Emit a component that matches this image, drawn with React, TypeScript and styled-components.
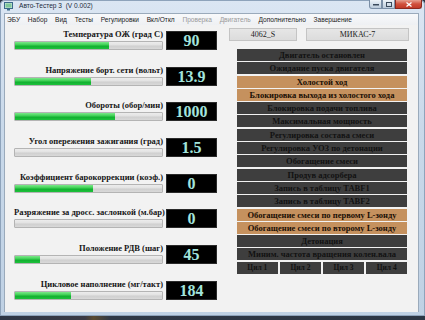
import React from "react";
import styled, { createGlobalStyle } from "styled-components";

const Global = createGlobalStyle`
  html, body { margin: 0; padding: 0; background: #2c3644; }
  #root { width: 425px; height: 320px; overflow: hidden; position: relative; }
`;

const Desktop = styled.div`
  width: 425px;
  height: 320px;
  background: linear-gradient(90deg, #2d3646 0%, #3a3a44 20%, #5a4a30 22%, #2f3846 26%, #2c3644 100%);
  display: flex;
  flex-direction: column;
`;

const Window = styled.div`
  height: 316px;
  display: flex;
  flex-direction: column;
  background: linear-gradient(180deg, #dbe6f3 0%, #c9d9ea 40%, #bfd1e4 100%);
  border-radius: 5px 5px 0 0;
  padding: 0 6px 4px 4px;
  box-sizing: border-box;
  box-shadow: inset 0 0 0 1px #8ea3bb;
`;

const TitleBar = styled.div`
  height: 13px;
  display: flex;
  align-items: flex-start;
  font-family: "Liberation Sans", "DejaVu Sans", sans-serif;
`;

const TitleIcon = styled.svg`
  width: 9px;
  height: 9px;
  margin: 2px 6px 0 0;
  flex: none;
`;

const TitleText = styled.div`
  font-size: 6.6px;
  color: #1c2a3a;
  line-height: 12px;
  white-space: pre;
  flex: 1;
`;

const WinButtons = styled.div`
  display: flex;
  margin-right: -3px;
`;

const WinBtn = styled.div<{ $close?: boolean; $w: number }>`
  width: ${(p) => p.$w}px;
  height: 9px;
  box-sizing: border-box;
  border: 1px solid ${(p) => (p.$close ? "#8a2a20" : "#7a8ea6")};
  border-top: none;
  background: ${(p) =>
    p.$close
      ? "linear-gradient(180deg, #e6a090 0%, #d0503c 50%, #c23a28 100%)"
      : "linear-gradient(180deg, #eef3f8 0%, #d4dfea 50%, #bccbdb 100%)"};
  display: flex;
  align-items: center;
  justify-content: center;
  &:first-child { border-bottom-left-radius: 3px; }
  &:last-child { border-bottom-right-radius: 3px; }
`;

const Client = styled.div`
  flex: 1;
  display: flex;
  flex-direction: column;
  background: #f2f2f2;
  border: 1px solid #9aaabb;
  border-bottom: none;
  min-height: 0;
`;

const MenuBar = styled.div`
  height: 11px;
  display: flex;
  align-items: center;
  gap: 7.7px;
  padding-left: 2px;
  background: linear-gradient(180deg, #f8f9fb 0%, #eef0f3 100%);
  font-family: "Liberation Sans", "DejaVu Sans", sans-serif;
  font-size: 6.6px;
`;

const MenuItem = styled.span<{ $disabled?: boolean }>`
  color: ${(p) => (p.$disabled ? "#9a9a9a" : "#1a1a1a")};
  white-space: nowrap;
`;

const Main = styled.div`
  flex: 1;
  display: flex;
  padding-left: 9px;
`;

const LeftCol = styled.div`
  display: flex;
  flex-direction: column;
  gap: 14.7px;
  padding-top: 4px;
`;

const GaugeRow = styled.div`
  display: flex;
  align-items: flex-end;
  gap: 3px;
  height: 21px;
`;

const GaugeInfo = styled.div`
  width: 149px;
  display: flex;
  flex-direction: column;
  align-items: stretch;
`;

const GaugeLabel = styled.div`
  font-family: "Liberation Serif", "DejaVu Serif", serif;
  font-weight: bold;
  font-size: 8.5px;
  line-height: 10px;
  text-align: right;
  color: #161616;
  white-space: nowrap;
  margin-bottom: 2px;
`;

const Bar = styled.div`
  height: 9px;
  box-sizing: border-box;
  border: 1px solid #b4b4b4;
  border-radius: 1px;
  background: linear-gradient(180deg, #ececec 0%, #e2e2e2 45%, #cfcfcf 55%, #d9d9d9 100%);
  overflow: hidden;
`;

const BarFill = styled.div`
  height: 100%;
  background: linear-gradient(180deg, #7ce88a 0%, #3fd055 40%, #12b030 60%, #1ec23c 100%);
`;

const ValueBox = styled.div`
  width: 51px;
  height: 19px;
  box-sizing: border-box;
  background: #000;
  border: 1px solid #2a2a2a;
  color: #a2e4dc;
  font-family: "Liberation Serif", "DejaVu Serif", serif;
  font-weight: bold;
  font-size: 16px;
  line-height: 17px;
  text-align: center;
`;

const RightCol = styled.div`
  display: flex;
  flex-direction: column;
  padding-top: 3px;
  margin-left: 12px;
`;

const InfoRow = styled.div`
  display: flex;
  gap: 9px;
`;

const InfoBox = styled.div<{ $w: number }>`
  width: ${(p) => p.$w}px;
  height: 13px;
  box-sizing: border-box;
  background: linear-gradient(180deg, #e6e6e6 0%, #dcdcdc 100%);
  border: 1px solid #c4c4c4;
  font-family: "Liberation Serif", "DejaVu Serif", serif;
  font-size: 8px;
  line-height: 11px;
  text-align: center;
  color: #222;
`;

const StatusList = styled.div`
  margin: 8px 0 0 8px;
  width: 170px;
  display: flex;
  flex-direction: column;
  gap: 1.3px;
`;

const StatusRow = styled.div<{ $tone: "dark" | "orange" }>`
  height: 12px;
  background: ${(p) => (p.$tone === "orange" ? "#c5915e" : "#3e3e3e")};
  color: ${(p) => (p.$tone === "orange" ? "#1a0f05" : "#121212")};
  font-family: "Liberation Serif", "DejaVu Serif", serif;
  font-weight: bold;
  font-size: 8.5px;
  line-height: 12px;
  text-align: center;
  white-space: nowrap;
`;

const CylRow = styled.div`
  display: flex;
  gap: 2.5px;
  height: 12px;
  margin-top: 0.5px;
`;

const CylBtn = styled.div`
  flex: 1;
  background: #3e3e3e;
  color: #121212;
  font-family: "Liberation Serif", "DejaVu Serif", serif;
  font-weight: bold;
  font-size: 7.5px;
  line-height: 12px;
  text-align: center;
`;

const gauges = [
  { label: "Температура ОЖ (град С)", value: "90", fill: 64 },
  { label: "Напряжение борт. сети (вольт)", value: "13.9", fill: 52 },
  { label: "Обороты (обор/мин)", value: "1000", fill: 68 },
  { label: "Угол опережения зажигания (град)", value: "1.5", fill: 0 },
  { label: "Коэффициент барокоррекции (коэф.)", value: "0", fill: 53 },
  { label: "Разряжение за дросс. заслонкой (м.бар)", value: "0", fill: 0 },
  { label: "Положение РДВ (шаг)", value: "45", fill: 17 },
  { label: "Цикловое наполнение (мг/такт)", value: "184", fill: 38 },
];

const statuses: { text: string; tone: "dark" | "orange" }[] = [
  { text: "Двигатель остановлен", tone: "dark" },
  { text: "Ожидание пуска двигателя", tone: "dark" },
  { text: "Холостой ход", tone: "orange" },
  { text: "Блокировка выхода из холостого хода", tone: "orange" },
  { text: "Блокировка подачи топлива", tone: "dark" },
  { text: "Максимальная мощность", tone: "dark" },
  { text: "Регулировка состава смеси", tone: "dark" },
  { text: "Регулировка УОЗ по детонации", tone: "dark" },
  { text: "Обогащение смеси", tone: "dark" },
  { text: "Продув адсорбера", tone: "dark" },
  { text: "Запись в таблицу TABF1", tone: "dark" },
  { text: "Запись в таблицу TABF2", tone: "dark" },
  { text: "Обогащение смеси по первому L-зонду", tone: "orange" },
  { text: "Обогащение смеси по второму L-зонду", tone: "orange" },
  { text: "Детонация", tone: "dark" },
  { text: "Миним. частота вращения колен.вала", tone: "dark" },
];

const menu = [
  { t: "ЭБУ" },
  { t: "Набор" },
  { t: "Вид" },
  { t: "Тесты" },
  { t: "Регулировки" },
  { t: "Вкл/Откл" },
  { t: "Проверка", d: true },
  { t: "Двигатель", d: true },
  { t: "Дополнительно" },
  { t: "Завершение" },
];

export default function App() {
  return (
    <>
      <Global />
      <Desktop>
        <Window>
          <TitleBar>
            <TitleIcon viewBox="0 0 9 9">
              <rect x="0.5" y="0.5" width="8" height="6" fill="#cfe8d8" stroke="#3a6a8a" strokeWidth="1" />
              <rect x="1.5" y="1.5" width="6" height="4" fill="#7fc89a" />
              <rect x="3" y="7" width="3" height="1.5" fill="#3a6a8a" />
            </TitleIcon>
            <TitleText>{"Авто-Тестер 3  (V 0.002)"}</TitleText>
            <WinButtons>
              <WinBtn $w={13}>
                <svg width="6" height="3" viewBox="0 0 6 3"><rect x="0" y="1" width="6" height="1.5" fill="#3b4a5c" /></svg>
              </WinBtn>
              <WinBtn $w={13}>
                <svg width="6" height="5" viewBox="0 0 6 5"><rect x="0.5" y="0.5" width="5" height="4" fill="none" stroke="#3b4a5c" strokeWidth="1" /></svg>
              </WinBtn>
              <WinBtn $w={27} $close>
                <svg width="6" height="5" viewBox="0 0 6 5"><path d="M0.5 0.5 L5.5 4.5 M5.5 0.5 L0.5 4.5" stroke="#fff" strokeWidth="1.3" /></svg>
              </WinBtn>
            </WinButtons>
          </TitleBar>
          <Client>
            <MenuBar>
              {menu.map((m) => (
                <MenuItem key={m.t} $disabled={m.d}>{m.t}</MenuItem>
              ))}
            </MenuBar>
            <Main>
              <LeftCol>
                {gauges.map((g) => (
                  <GaugeRow key={g.label}>
                    <GaugeInfo>
                      <GaugeLabel>{g.label}</GaugeLabel>
                      <Bar>
                        <BarFill style={{ width: `${g.fill}%` }} />
                      </Bar>
                    </GaugeInfo>
                    <ValueBox>{g.value}</ValueBox>
                  </GaugeRow>
                ))}
              </LeftCol>
              <RightCol>
                <InfoRow>
                  <InfoBox $w={68}>4062_S</InfoBox>
                  <InfoBox $w={103}>МИКАС-7</InfoBox>
                </InfoRow>
                <StatusList>
                  {statuses.map((s) => (
                    <StatusRow key={s.text} $tone={s.tone}>{s.text}</StatusRow>
                  ))}
                  <CylRow>
                    {[1, 2, 3, 4].map((n) => (
                      <CylBtn key={n}>Цил {n}</CylBtn>
                    ))}
                  </CylRow>
                </StatusList>
              </RightCol>
            </Main>
          </Client>
        </Window>
      </Desktop>
    </>
  );
}
